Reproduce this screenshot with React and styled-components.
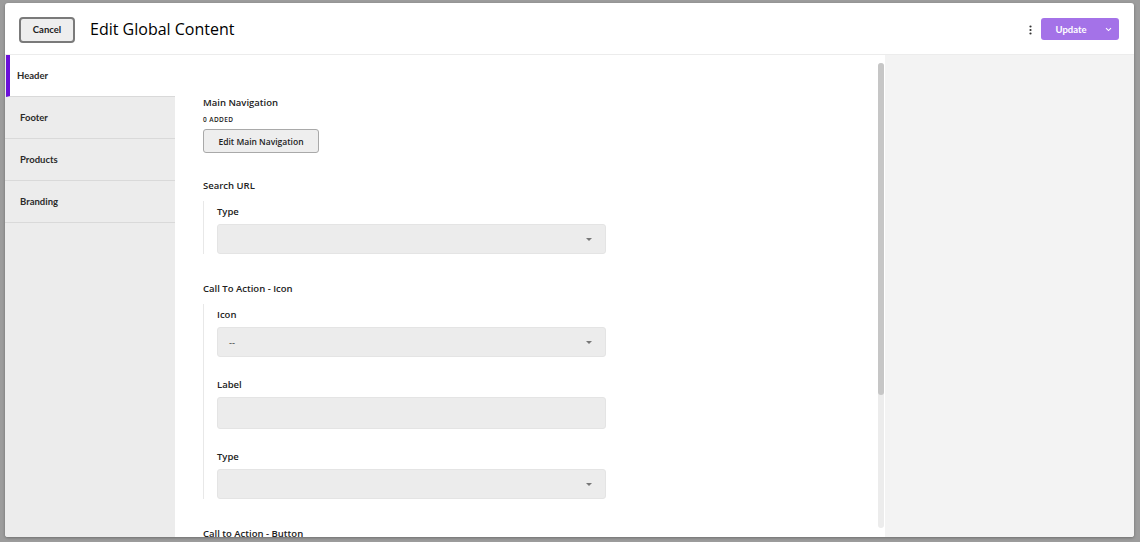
import React from "react";
import styled, { createGlobalStyle } from "styled-components";

const Global = createGlobalStyle`
  html, body { margin: 0; padding: 0; }
  body { font-family: "Open Sans", "Noto Sans", sans-serif; color: #222; }
  * { box-sizing: border-box; }
`;

const Backdrop = styled.div`
  width: 1140px;
  height: 542px;
  background: #9c9c9c;
  padding: 3px 6px 5px 5px;
  overflow: hidden;
`;

const Modal = styled.div`
  width: 100%;
  height: 100%;
  background: #fff;
  border-radius: 3px;
  display: flex;
  flex-direction: column;
  overflow: hidden;
  box-shadow: 0 1px 3px rgba(0,0,0,0.3);
`;

const TopBar = styled.header`
  height: 52px;
  flex: none;
  display: flex;
  align-items: center;
  padding: 0 14px 0 14px;
  border-bottom: 1px solid #ececec;
`;

const CancelButton = styled.button`
  width: 56px;
  height: 26px;
  border: 2px solid #7a7a7a;
  border-radius: 4px;
  background: #eeeeee;
  font-family: "Lato", sans-serif;
  font-weight: 700;
  font-size: 9.5px;
  color: #222;
  padding: 0;
  margin-top: 2px;
`;

const Title = styled.h1`
  margin: 0 0 0 15px;
  font-family: "Open Sans", sans-serif;
  font-weight: 500;
  font-size: 16px;
  color: #000;
  flex: 1;
`;

const Kebab = styled.div`
  width: 10px;
  display: flex;
  justify-content: center;
  margin-right: 6px;
  margin-top: 2px;
`;

const Update = styled.div`
  width: 78px;
  height: 22px;
  margin-right: 1px;
  margin-top: 1px;
  border-radius: 3px;
  background: #a472e8;
  display: flex;
  align-items: center;
  color: #fff;
  font-family: "Lato", sans-serif;
  font-weight: 700;
  font-size: 9.5px;
`;

const UpdateLabel = styled.span`
  flex: 1;
  text-align: center;
  padding-left: 4px;
`;

const UpdateCaret = styled.span`
  width: 22px;
  display: flex;
  justify-content: center;
`;

const Body = styled.div`
  flex: 1;
  display: flex;
  min-height: 0;
`;

const Sidebar = styled.nav`
  width: 170px;
  flex: none;
  background: #ececec;
`;

const NavItem = styled.div`
  height: 42px;
  display: flex;
  align-items: center;
  font-family: "Lato", sans-serif;
  font-weight: 700;
  font-size: 9.5px;
  color: #2a2a2a;
  padding-left: ${(p) => (p.$active ? "7px" : "15px")};
  background: ${(p) => (p.$active ? "#fff" : "#ececec")};
  border-left: ${(p) => (p.$active ? "4px solid #6b10d9" : "none")};
  margin-left: ${(p) => (p.$active ? "1px" : "0")};
  border-bottom: 1px solid #d9d9d9;
`;

const ContentWrap = styled.div`
  flex: 1;
  position: relative;
  overflow: hidden;
`;

const Content = styled.main`
  height: 100%;
  overflow: hidden;
  padding: 41px 0 0 28px;
`;

const ScrollTrack = styled.div`
  position: absolute;
  top: 8px;
  bottom: 9px;
  right: 1px;
  width: 6px;
  border-radius: 3px;
  background: #ececec;
`;

const ScrollThumb = styled.div`
  width: 100%;
  border-radius: 3px;
  background: #c6c6c6;
`;

const Inner = styled.div`
  width: 403px;
`;

const Section = styled.section`
  margin-bottom: ${(p) => p.$mb || 0}px;
`;

const SectionTitle = styled.div`
  font-size: 9.5px;
  font-weight: 600;
  color: #222;
  line-height: 13px;
`;

const Count = styled.div`
  font-size: 6.5px;
  font-weight: 600;
  letter-spacing: 0.4px;
  color: #222;
  margin-top: 6px;
  line-height: 10px;
`;

const GhostButton = styled.button`
  margin-top: 4px;
  height: 24px;
  width: 116px;
  border: 1px solid #a9a9a9;
  border-radius: 3px;
  background: #eeeeee;
  font-family: "Open Sans", sans-serif;
  font-weight: 600;
  font-size: 8.5px;
  color: #222;
  padding: 0;
`;

const Group = styled.div`
  margin-top: ${(p) => p.$mt}px;
  border-left: 1px solid #e8e8e8;
  padding: 4px 0 0 13px;
`;

const Field = styled.div`
  margin-bottom: ${(p) => p.$mb || 0}px;
`;

const FieldLabel = styled.div`
  font-size: 9.5px;
  font-weight: 600;
  color: #222;
  line-height: 13px;
  margin-bottom: 6px;
`;

const Select = styled.div`
  height: ${(p) => p.$h || 30}px;
  width: 389px;
  background: #ececec;
  border: 1px solid #e4e4e4;
  border-radius: 3px;
  display: flex;
  align-items: center;
  padding: 0 13px 0 11px;
  font-size: 9.5px;
  color: #333;
`;

const SelectValue = styled.span`
  flex: 1;
`;

const Caret = styled.span`
  width: 0;
  height: 0;
  border-left: 3px solid transparent;
  border-right: 3px solid transparent;
  border-top: 3px solid #777;
`;

const Aside = styled.aside`
  width: 249px;
  flex: none;
  background: #f3f3f3;
`;

export default function App() {
  const thumbRatio = 0.715;
  return (
    <>
      <Global />
      <Backdrop>
        <Modal>
          <TopBar>
            <CancelButton>Cancel</CancelButton>
            <Title>Edit Global Content</Title>
            <Kebab>
              <svg width="3" height="10" viewBox="0 0 3 10">
                <circle cx="1.5" cy="1.5" r="1.1" fill="#333" />
                <circle cx="1.5" cy="5" r="1.1" fill="#333" />
                <circle cx="1.5" cy="8.5" r="1.1" fill="#333" />
              </svg>
            </Kebab>
            <Update>
              <UpdateLabel>Update</UpdateLabel>
              <UpdateCaret>
                <svg width="7" height="5" viewBox="0 0 7 5">
                  <path d="M1 1.2 L3.5 3.6 L6 1.2" stroke="#fff" strokeWidth="1.1" fill="none" />
                </svg>
              </UpdateCaret>
            </Update>
          </TopBar>
          <Body>
            <Sidebar>
              <NavItem $active>Header</NavItem>
              <NavItem>Footer</NavItem>
              <NavItem>Products</NavItem>
              <NavItem>Branding</NavItem>
            </Sidebar>
            <ContentWrap>
              <Content>
                <Inner>
                  <Section $mb={26}>
                    <SectionTitle>Main Navigation</SectionTitle>
                    <Count>0 ADDED</Count>
                    <GhostButton>Edit Main Navigation</GhostButton>
                  </Section>
                  <Section $mb={28}>
                    <SectionTitle>Search URL</SectionTitle>
                    <Group $mt={9}>
                      <Field>
                        <FieldLabel>Type</FieldLabel>
                        <Select>
                          <SelectValue />
                          <Caret />
                        </Select>
                      </Field>
                    </Group>
                  </Section>
                  <Section $mb={28}>
                    <SectionTitle>Call To Action - Icon</SectionTitle>
                    <Group $mt={9}>
                      <Field $mb={21}>
                        <FieldLabel>Icon</FieldLabel>
                        <Select>
                          <SelectValue>--</SelectValue>
                          <Caret />
                        </Select>
                      </Field>
                      <Field $mb={21}>
                        <FieldLabel>Label</FieldLabel>
                        <Select $h={32} />
                      </Field>
                      <Field>
                        <FieldLabel>Type</FieldLabel>
                        <Select>
                          <SelectValue />
                          <Caret />
                        </Select>
                      </Field>
                    </Group>
                  </Section>
                  <Section>
                    <SectionTitle>Call to Action - Button</SectionTitle>
                    <Group $mt={9}>
                      <Field $mb={21}>
                        <FieldLabel>Label</FieldLabel>
                        <Select $h={32} />
                      </Field>
                    </Group>
                  </Section>
                </Inner>
              </Content>
              <ScrollTrack>
                <ScrollThumb style={{ height: `${thumbRatio * 100}%` }} />
              </ScrollTrack>
            </ContentWrap>
            <Aside />
          </Body>
        </Modal>
      </Backdrop>
    </>
  );
}
